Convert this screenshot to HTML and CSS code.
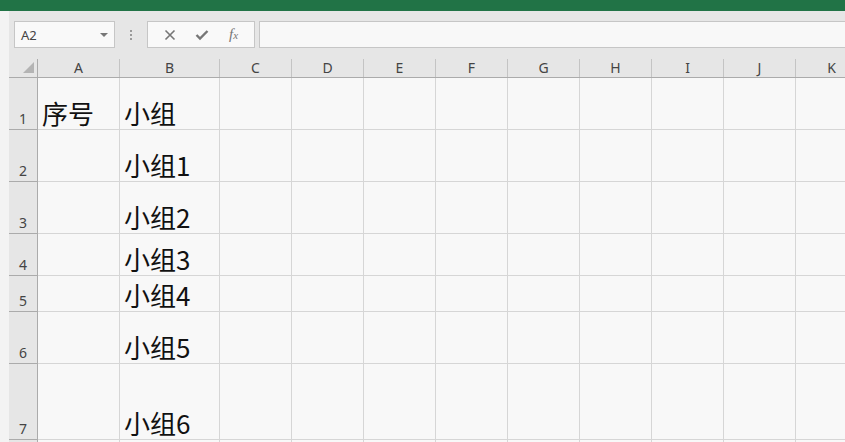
FILE: index.html
```html
<!DOCTYPE html>
<html lang="zh-CN">
<head>
  <meta charset="UTF-8">
  <title>工作表</title>
  <link rel="stylesheet" href="styles.css">
</head>
<body>
  <div class="titlebar"></div>
  <div class="app">
    <!-- 名称框 + 编辑栏 -->
    <div class="toolbar">
      <div class="namebox">
        <span>A2</span>
        <span class="caret"></span>
      </div>
      <div class="grip"><i></i><i></i><i></i></div>
      <div class="fxbtns">
        <svg width="12" height="12" viewBox="0 0 12 12"><path d="M1.5 1.5 L10.5 10.5 M10.5 1.5 L1.5 10.5" stroke="#767676" stroke-width="1.6" fill="none"/></svg>
        <svg width="14" height="12" viewBox="0 0 14 12"><path d="M1.5 6 L5 9.5 L12.5 2" stroke="#767676" stroke-width="2.4" fill="none"/></svg>
        <span class="fx">f<small>x</small></span>
      </div>
      <div class="formula"></div>
    </div>

    <!-- 表格 -->
    <div class="sheet">
      <div class="row head">
        <div class="corner"><span></span></div>
        <div>A</div><div>B</div><div>C</div><div>D</div><div>E</div><div>F</div>
        <div>G</div><div>H</div><div>I</div><div>J</div><div>K</div>
      </div>
      <div class="row h52">
        <div class="num">1</div><div class="cell">序号</div><div class="cell">小组</div>
        <div></div><div></div><div></div><div></div><div></div><div></div><div></div><div></div><div></div>
      </div>
      <div class="row h52">
        <div class="num">2</div><div class="cell"></div><div class="cell">小组1</div>
        <div></div><div></div><div></div><div></div><div></div><div></div><div></div><div></div><div></div>
      </div>
      <div class="row h52">
        <div class="num">3</div><div class="cell"></div><div class="cell">小组2</div>
        <div></div><div></div><div></div><div></div><div></div><div></div><div></div><div></div><div></div>
      </div>
      <div class="row h42">
        <div class="num">4</div><div class="cell"></div><div class="cell">小组3</div>
        <div></div><div></div><div></div><div></div><div></div><div></div><div></div><div></div><div></div>
      </div>
      <div class="row h36">
        <div class="num">5</div><div class="cell"></div><div class="cell">小组4</div>
        <div></div><div></div><div></div><div></div><div></div><div></div><div></div><div></div><div></div>
      </div>
      <div class="row h52">
        <div class="num">6</div><div class="cell"></div><div class="cell">小组5</div>
        <div></div><div></div><div></div><div></div><div></div><div></div><div></div><div></div><div></div>
      </div>
      <div class="row h76">
        <div class="num">7</div><div class="cell"></div><div class="cell">小组6</div>
        <div></div><div></div><div></div><div></div><div></div><div></div><div></div><div></div><div></div>
      </div>
      <div class="row h52">
        <div class="num"></div><div class="cell"></div><div class="cell"></div>
        <div></div><div></div><div></div><div></div><div></div><div></div><div></div><div></div><div></div>
      </div>
    </div>
  </div>
</body>
</html>
```
FILE: styles.css
```css
html, body { margin: 0; height: 100%; overflow: hidden; }
body {
  background: #f3f3f3;
  font-family: "Noto Sans", "Noto Sans CJK SC", sans-serif;
  color: #222;
}
.titlebar { height: 11px; background: #217346; }
.app { margin-left: 9px; background: #e6e6e6; }

.toolbar { height: 48px; display: flex; align-items: flex-start; padding-top: 10px; box-sizing: border-box; }
.namebox {
  margin-left: 5px; width: 101px; height: 27px; box-sizing: border-box;
  border: 1px solid #c6c6c6; background: #f9f9f9;
  display: flex; align-items: center; justify-content: space-between;
  padding: 0 6px 0 6px; font-size: 13px; color: #444;
}
.caret { width: 0; height: 0; border-left: 4px solid transparent; border-right: 4px solid transparent; border-top: 4px solid #777; margin-top: 1px; }
.grip { width: 32px; display: flex; flex-direction: column; align-items: center; gap: 2px; padding-top: 9px; }
.grip i { width: 2px; height: 2px; background: #9a9a9a; }
.fxbtns {
  width: 108px; height: 27px; box-sizing: border-box;
  border: 1px solid #c6c6c6; background: #f9f9f9;
  display: flex; align-items: center; justify-content: space-around; padding: 0 6px;
}
.fx { font-family: "Liberation Serif", serif; font-style: italic; color: #767676; font-size: 15px; }
.fx small { font-size: 11px; }
.formula { flex: 1; margin-left: 4px; height: 27px; box-sizing: border-box; border: 1px solid #c6c6c6; border-right: 0; background: #f8f8f8; }

.sheet { background: #f8f8f8; }
.row {
  display: grid;
  grid-template-columns: 29px 82px 100px 72px repeat(8, 72px);
  border-bottom: 1px solid #d6d6d6;
  box-sizing: border-box;
}
.row > div { border-right: 1px solid #d6d6d6; box-sizing: border-box; }
.row > .num, .row > .corner {
  background: #e6e6e6; border-right-color: #ababab;
  font-size: 14px; color: #444; text-align: center;
  display: flex; align-items: flex-end; justify-content: center; padding-bottom: 1px;
}
.head { height: 19px; background: #e6e6e6; border-bottom-color: #ababab; }
.head > div {
  border-right-color: #c4c4c4;
  font-size: 14px; color: #444; line-height: 18px; text-align: center;
}
.corner span {
  position: relative; top: -3px; left: 5px;
  width: 0; height: 0; border-left: 11px solid transparent; border-bottom: 11px solid #b4b4b4;
}
.row:not(.head) > .num { border-bottom: 1px solid #ababab; margin-bottom: -1px; }
.cell {
  font-family: "Noto Sans CJK SC", sans-serif; font-size: 26px; line-height: 1;
  display: flex; align-items: flex-end; padding: 0 0 3px 4px; color: #111;
  white-space: nowrap;
}
.h52 { height: 52px; }
.h42 { height: 42px; }
.h36 { height: 36px; }
.h76 { height: 76px; }
```
